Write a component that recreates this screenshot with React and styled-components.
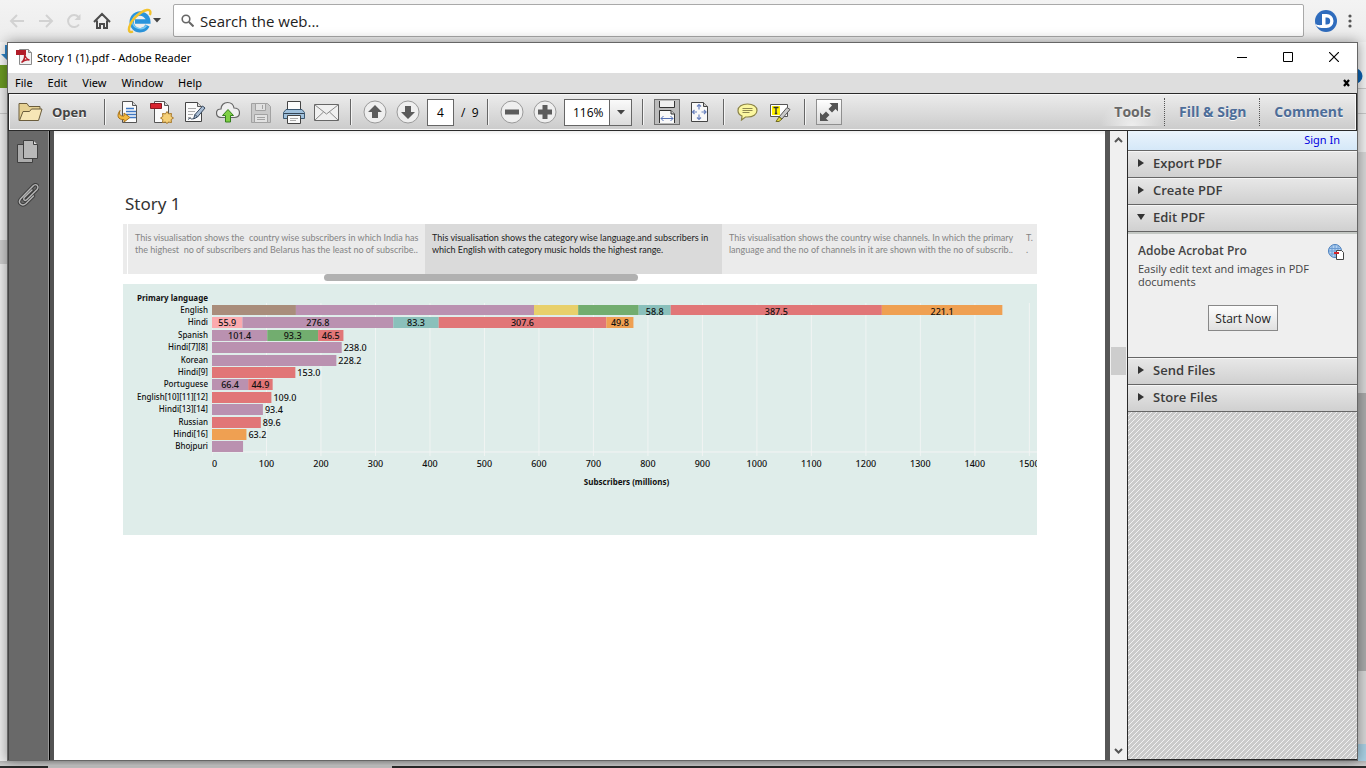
import React from "react";
import styled, { createGlobalStyle, css } from "styled-components";

const ui = '"Noto Sans", "Open Sans", "Liberation Sans", sans-serif';

const Global = createGlobalStyle`
  *, *::before, *::after { box-sizing: border-box; }
  body { margin: 0; font-family: "Open Sans", "Noto Sans", "Liberation Sans", sans-serif; background: #efefef; }
  button, input, select { font: inherit; color: inherit; margin: 0; padding: 0; border: 0; background: none; border-radius: 0; }
  h1, h2, p { margin: 0; }
  svg { display: block; }
`;

/* ---------- browser behind the window ---------- */

const Desktop = styled.div`
  min-height: 100vh;
  display: flex;
  flex-direction: column;
`;

const BrowserBar = styled.header`
  height: 42px;
  display: flex;
  align-items: center;
  padding: 0 5px 1px 9px;
  background: linear-gradient(#f3f3f3, #ececec);
`;

const BrowserButton = styled.button`
  width: ${(p) => p.$w || 28}px;
  height: 28px;
  display: flex;
  align-items: center;
  justify-content: ${(p) => (p.$center ? "center" : "flex-start")};
  flex: none;
`;

const SearchBox = styled.label`
  flex: 1;
  height: 33px;
  display: flex;
  align-items: center;
  gap: 6px;
  padding: 0 7px;
  background: #fff;
  border: 1px solid #a9a9a9;
  border-radius: 2px;
`;

const SearchInput = styled.input`
  flex: 1;
  font-size: 15px;
  color: #222;
  outline: none;
  &::placeholder { color: #222; opacity: 1; }
`;

const Middle = styled.div`
  flex: 1;
  display: flex;
`;

const Strip = styled.div`
  width: ${(p) => p.$w}px;
  flex: none;
  display: flex;
  flex-direction: column;
  overflow: hidden;
`;

const Piece = styled.div`
  height: ${(p) => p.$h}px;
  flex: ${(p) => (p.$grow ? 1 : "none")};
  background: ${(p) => p.$bg};
  border-bottom: ${(p) => (p.$line ? "1px solid #c8c8c8" : "0")};
`;

const BottomStrip = styled.footer`
  height: 7px;
  display: flex;
  align-items: flex-end;
  background: linear-gradient(#b4b4b4, #d8d8d8);
`;

const BottomPart = styled.div`
  height: 2px;
  flex: ${(p) => p.$grow} 1 0;
  background: ${(p) => p.$bg};
`;

/* ---------- reader window ---------- */

const Window = styled.main`
  position: relative;
  flex: 1;
  min-width: 0;
  display: flex;
  flex-direction: column;
  background: #fff;
  border: 1px solid #666;
  box-shadow: 0 0 12px rgba(0, 0, 0, 0.4);
`;

const TitleBar = styled.div`
  height: 30px;
  display: flex;
  align-items: center;
  padding: 0 0 2px 8px;
  color: #000;
`;

const TitleText = styled.h1`
  flex: 1;
  margin-left: 5px;
  font-family: ${ui};
  font-size: 11px;
  font-weight: 400;
`;

const CaptionButton = styled.button`
  width: 46px;
  height: 28px;
  display: flex;
  align-items: center;
  justify-content: center;
`;

const MenuBar = styled.nav`
  height: 20px;
  display: flex;
  align-items: center;
  gap: 15px;
  padding: 0 4px 0 7px;
  background: #dedede;
  color: #000;
  font-family: ${ui};
  font-size: 11px;
`;

const MenuItem = styled.button`
  line-height: 20px;
`;

const CloseDoc = styled.button`
  margin-left: auto;
  width: 10px;
  height: 12px;
`;

const Toolbar = styled.div`
  height: 38px;
  display: flex;
  align-items: center;
  border: 1px solid #2a2a2a;
  box-shadow: inset 0 0 0 1px #f8f8f8;
  background: linear-gradient(#ececec, #cbcbcb);
`;

const OpenButton = styled.button`
  width: 88px;
  height: 30px;
  display: flex;
  align-items: center;
  gap: 9px;
  padding-left: 9px;
  font-size: 13px;
  font-weight: 700;
  color: #444;
  text-shadow: 0 1px 0 #fff;
`;

const Sep = styled.span`
  width: 1px;
  height: 26px;
  margin: 0 7px;
  background: #666;
  box-shadow: 1px 0 0 #f4f4f4;
`;

const ToolButton = styled.button`
  width: 33px;
  height: 28px;
  flex: none;
  display: flex;
  align-items: center;
  justify-content: center;
`;

const PageInput = styled.input`
  width: 27px;
  height: 27px;
  margin-left: 3px;
  border: 1px solid #666;
  background: #fff;
  color: #000;
  font-size: 12px;
  text-align: center;
`;

const PageTotal = styled.span`
  width: 26px;
  padding-left: 7px;
  font-size: 12px;
  color: #000;
  white-space: pre;
`;

const ZoomBox = styled.div`
  width: 68px;
  height: 27px;
  margin: 0 3px;
  display: grid;
  border: 1px solid #666;
  background: #fff;
`;

const ZoomSelect = styled.select`
  grid-area: 1 / 1;
  appearance: none;
  padding-left: 8px;
  font-size: 12px;
  color: #000;
`;

const ZoomCaret = styled.span`
  grid-area: 1 / 1;
  justify-self: end;
  width: 22px;
  display: flex;
  align-items: center;
  justify-content: center;
  border-left: 1px solid #666;
  background: linear-gradient(#fafafa, #dcdcdc);
  pointer-events: none;
`;

const Pressed = styled.span`
  width: 26px;
  height: 26px;
  display: flex;
  align-items: center;
  justify-content: center;
  border: 1px solid ${(p) => (p.$light ? "#8f8f8f" : "#6f6f6f")};
  background: ${(p) => (p.$light ? "linear-gradient(#fff, #d8d8d8)" : "#bcbcbc")};
`;

const PaneTabs = styled.div`
  margin-left: auto;
  display: flex;
  align-items: center;
`;

const PaneTab = styled.button`
  height: 28px;
  padding: 0 13px 2px 14px;
  font-size: 14px;
  font-weight: 700;
  color: ${(p) => (p.$active ? "#686868" : "#4d6d99")};
  text-shadow: 0 1px 0 #f6f6f6;
  & + & { border-left: 1px dotted #555; }
  ${(p) => p.$active && css`background: radial-gradient(ellipse at 50% 100%, #eee, transparent 70%);`}
`;

const Body = styled.div`
  flex: 1;
  display: flex;
`;

const SideRail = styled.aside`
  width: 42px;
  flex: none;
  padding: 8px 0 0 8px;
  display: flex;
  flex-direction: column;
  gap: 18px;
  background: #696969;
  border-left: 1px solid #444;
  border-right: 1px solid #000;
  box-shadow: inset -1px 0 0 #999;
`;

const RailButton = styled.button`
  width: 26px;
  height: 25px;
`;

const DocArea = styled.section`
  flex: 1;
  min-width: 0;
  display: flex;
  border-left: 4px solid #535353;
  border-right: 5px solid #565656;
`;

const Paper = styled.article`
  flex: 1;
  min-width: 0;
  padding: 59px 68px 0 69px;
  background: linear-gradient(#ededed, #fff 4px);
`;

const StoryTitle = styled.h2`
  margin-bottom: 6px;
  padding-left: 2px;
  font-family: ${ui};
  font-size: 17px;
  line-height: 28px;
  font-weight: 400;
  color: #333;
`;

const Points = styled.div`
  display: grid;
  grid-template-columns: 5px 297fr 297fr 297fr 18fr;
  height: 50px;
`;

const PointEdge = styled.span`
  margin-right: 1px;
  background: #ebebeb;
`;

const Point = styled.button`
  min-width: 0;
  overflow: hidden;
  padding: 8px 0 0 7px;
  text-align: left;
  display: flex;
  flex-direction: column;
  white-space: pre;
  font-family: Lato, ${ui};
  font-size: 9px;
  line-height: 12px;
  background: ${(p) => (p.$active ? "#dadada" : "#ebebeb")};
  color: ${(p) => (p.$active ? "#222" : "#848484")};
`;

const StoryScroll = styled.div`
  height: 10px;
  padding-left: 22%;
`;

const StoryThumb = styled.div`
  width: 44%;
  height: 7px;
  border-radius: 4px;
  background: #b1b1b1;
`;

const ChartCard = styled.figure`
  margin: 0;
  display: flex;
  background: #dfedea;
  overflow: hidden;
`;

const ChartLabels = styled.svg`
  width: 89px;
  height: 251px;
  flex: none;
  font-family: ${ui};
  font-size: 8px;
  font-weight: 500;
  fill: #111;
`;

const ChartPlot = styled.svg`
  flex: 1;
  min-width: 0;
  height: 251px;
  font-family: ${ui};
  font-size: 9px;
  font-weight: 500;
  fill: #111;
`;

const ScrollBar = styled.div`
  width: 17px;
  flex: none;
  display: flex;
  flex-direction: column;
  align-items: center;
  justify-content: space-between;
  padding: 6px 0;
  background: #f0f0f0;
`;

const ScrollTrack = styled.div`
  flex: 1;
  width: 15px;
  display: flex;
  flex-direction: column;
`;

const Gap = styled.span`
  flex: ${(p) => p.$grow} 1 0;
`;

const ScrollThumb = styled.span`
  height: 28px;
  background: #cdcdcd;
`;

const Panel = styled.aside`
  width: 230px;
  flex: none;
  display: flex;
  flex-direction: column;
  border-left: 1px solid #2a2a2a;
  border-bottom: 1px solid #2a2a2a;
  background-color: #cbcbcb;
  background-image: linear-gradient(to bottom right, transparent 44%, #f2f2f2 44%, #f2f2f2 56%, transparent 56%);
  background-size: 5px 5px;
`;

const SignInRow = styled.div`
  height: 19px;
  padding-right: 17px;
  text-align: right;
  line-height: 18px;
  font-family: ${ui};
  font-size: 11px;
  background: linear-gradient(#eaf4fc, #d5e8f8);
`;

const SignInLink = styled.a`
  color: #0000e0;
  text-decoration: none;
`;

const PanelHeader = styled.button`
  height: 27px;
  display: flex;
  align-items: center;
  gap: 8px;
  padding: 0 0 2px 9px;
  border-top: 1px solid #666;
  box-shadow: inset 0 1px 0 #f6f6f6;
  background: linear-gradient(#e8e8e8, #d0d0d0);
  font-size: 13px;
  font-weight: 600;
  color: #3c3c3c;
`;

const PanelBody = styled.div`
  height: 126px;
  padding: 12px 12px 0 10px;
  border-top: 1px solid #666;
  box-shadow: inset 0 2px 0 #c4c8c4;
  background: #efefef;
  color: #444;
`;

const OfferHead = styled.div`
  display: flex;
  justify-content: space-between;
  height: 18px;
`;

const OfferTitle = styled.h2`
  font-size: 12px;
  line-height: 14px;
  font-weight: 600;
`;

const OfferText = styled.p`
  width: 190px;
  font-size: 11px;
  line-height: 13px;
`;

const StartButton = styled.button`
  display: block;
  width: 70px;
  height: 26px;
  margin: 17px auto 0 70px;
  border: 1px solid #888;
  background: linear-gradient(#fdfdfd, #e0e0e0);
  font-size: 12px;
  color: #222;
`;

const Closing = styled.div`
  border-top: 1px solid #666;
`;

/* ---------- icons ---------- */

const Arrow = ({ flip }) => (
  <svg width="16" height="16" viewBox="0 0 16 16" fill="none" stroke="#d2d2d2" strokeWidth="2">
    {flip ? <path d="M1 8h13M8 2l6 6-6 6" /> : <path d="M15 8H2M8 2L2 8l6 6" />}
  </svg>
);
const Reload = () => (
  <svg width="16" height="16" viewBox="0 0 16 16" fill="none" stroke="#d2d2d2" strokeWidth="2">
    <path d="M13 11.5A6 6 0 1 1 12.5 4" /><path d="M14.5 1v6h-6z" fill="#d2d2d2" stroke="none" />
  </svg>
);
const Home = () => (
  <svg width="18" height="18" viewBox="0 0 18 18" fill="none" stroke="#4c4c4c" strokeWidth="2">
    <path d="M1 10L9 2l8 8M4 8.500V16h3v-4h4v4h3V8.500" />
  </svg>
);
const Explorer = () => (
  <svg width="26" height="26" viewBox="0 0 26 26" fill="none">
    <path d="M20.500 17.500A8.300 8.300 0 1 1 21.300 13.500H8" stroke="#2a94dc" strokeWidth="4.400" />
    <path d="M19.500 17.500A7.800 7.800 0 0 1 5.500 14C5.800 9 9 6.500 13 6" stroke="#7cccf4" strokeWidth="1.400" />
    <path d="M6 23.500c-3.500 1.500-5-.5-3.500-5C4.500 11.500 13 3.500 20 2c3.500-.6 4 2 2.800 5" stroke="#f3c32c" strokeWidth="2.400" />
  </svg>
);
const Caret = ({ color = "#444" }) => (
  <svg width="8" height="5" viewBox="0 0 8 5"><path d="M0 0h8L4 4.500z" fill={color} /></svg>
);
const Magnifier = () => (
  <svg width="13" height="13" viewBox="0 0 13 13" fill="none" stroke="#666"><circle cx="5" cy="5" r="3.800" strokeWidth="1.600" /><path d="M8 8l4.500 4.500" strokeWidth="2" /></svg>
);
const Profile = () => (
  <svg width="22" height="22" viewBox="0 0 22 22">
    <circle cx="11" cy="11" r="11" fill="#2f6cbd" />
    <path d="M7 4h4.500a7 7 0 0 1 0 14H8C4 18 1 16.500.5 14c2 1.200 4 1.300 6.500 1z" fill="#fff" />
    <path d="M10.500 7.500h1.200a3.500 3.500 0 0 1 0 7h-1.200z" fill="#2f6cbd" />
  </svg>
);
const Kebab = () => (
  <svg width="4" height="14" viewBox="0 0 4 14" fill="#555"><circle cx="2" cy="2" r="1.600" /><circle cx="2" cy="7" r="1.600" /><circle cx="2" cy="12" r="1.600" /></svg>
);
const PdfFile = () => (
  <svg width="16" height="16" viewBox="0 0 16 16">
    <path d="M3.500.5h9l3 3v12h-12z" fill="#f2f2f2" stroke="#8a8a8a" />
    <path d="M12.500.5v3h3" fill="#ccc" stroke="#8a8a8a" />
    <path d="M0 1h10v5H0z" fill="#b11c28" />
    <path d="M8.500 4.500c.5 3 2.500 6 5 6.500-3-.8-6 .5-8 2.500 2.500-2 3.800-5 3-9z" fill="none" stroke="#b5202c" strokeWidth="1.500" />
  </svg>
);
const Folder = () => (
  <svg width="25" height="20" viewBox="0 0 25 20" stroke="#6b5d3c" strokeLinejoin="round">
    <path d="M1 18.500V1.500h8l2 3h11V10L18.500 18.500z" fill="#e6d193" />
    <path d="M1.500 18.500L5 9.500h6.500l2-2.500H24l-3.500 11.500z" fill="#f6e6b6" />
  </svg>
);
const Sheet = ({ x = 4 }) => (
  <g><path d={`M${x}.5h10l4 4v17h-14z`} fill="#fbfbfb" stroke="#555" /><path d={`M${x + 10}.5v4h4`} fill="#d8d8d8" stroke="#555" /></g>
);
const Convert = () => (
  <svg width="24" height="22" viewBox="0 0 24 22">
    <Sheet x={5.5} />
    <path d="M9 7.500h8M9 10.500h10M9 13.500h10M13 16.500h6" stroke="#3f78c4" strokeWidth="1.400" />
    <path d="M3 9.500C-.5 14 .5 19 7 18.500V21l6-4.500L7 12v3c-3.500.5-5.500-1.500-4-5.500z" fill="#f3b93f" stroke="#a8721a" />
  </svg>
);
const CreatePdf = () => (
  <svg width="24" height="23" viewBox="0 0 24 23">
    <Sheet x={4.5} />
    <path d="M.5 2.500h11v5H.5z" fill="#d8232f" stroke="#8c1820" />
    <path d="M17 10.500l1.600 2.400 2.900-.4-.4 2.900 2.400 1.600-2.400 1.600.4 2.900-2.900-.4L17 22.500l-1.600-1.400-2.900.4.4-2.900-2.400-1.600 2.400-1.600-.4-2.900 2.900.4z" fill="#f5d078" stroke="#a8792b" />
  </svg>
);
const SignDoc = () => (
  <svg width="22" height="22" viewBox="0 0 22 22">
    <path d="M1.500 1.500h12l4 4v15h-16z" fill="#fafafa" stroke="#444" />
    <path d="M13.500 1.500v4h4" fill="#ddd" stroke="#555" />
    <path d="M4 7.500h8M4 10.500h7M4 13.500h5M4 16.500h3" stroke="#aaa" />
    <path d="M9.500 18l1.500-4.500L18.500 5 21 7l-7.500 9z" fill="#a9bdd4" stroke="#34465c" />
    <path d="M11 13.500l2.500 2.500M4 18.500c3-3 3 1 5-1" stroke="#34465c" fill="none" />
  </svg>
);
const Cloud = () => (
  <svg width="24" height="22" viewBox="0 0 24 22">
    <path d="M6 16.500C2.500 16.500.5 14.500.5 12S2.500 8 5 8c0-4 3-6.500 6.500-6.500S17.500 4 18 7c3 0 5.500 1.800 5.500 4.800s-2 4.700-5 4.700z" fill="#efefef" stroke="#666" strokeWidth="1.200" />
    <path d="M12 8.500l5.500 6h-3v6.500h-5v-6.500h-3z" fill="#7fd044" stroke="#35801d" />
  </svg>
);
const Save = () => (
  <svg width="20" height="21" viewBox="0 0 20 21" stroke="#a2a2a2">
    <path d="M.5 1.500h16l3 3v16H.5z" fill="#c9c9c9" />
    <path d="M4.500 1.500h10v7h-10zM3.500 12.500h13v8h-13z" fill="#e2e2e2" />
    <path d="M11.500 3v4M6 15.500h8M6 17.500h8" />
  </svg>
);
const Printer = () => (
  <svg width="22" height="23" viewBox="0 0 22 23" stroke="#444">
    <path d="M4.500.5h13v9h-13z" fill="#fcfcfc" />
    <path d="M3 8.500h16l2.500 3v6h-21v-6z" fill="#9fc0dc" stroke="#3b5871" />
    <path d="M1 12.500h20" stroke="#345" />
    <path d="M4.500 14.500h13v8h-13z" fill="#fafafa" />
    <path d="M7 17.500h8M7 19.500h6" stroke="#aaa" />
  </svg>
);
const Mail = () => (
  <svg width="25" height="17" viewBox="0 0 25 17" stroke="#666" fill="none">
    <path d="M.5.500h24v16H.5z" fill="#f0f0f0" /><path d="M1 1l11.500 9L24 1M1 16l8.500-8M24 16l-8.500-8" stroke="#8a8a8a" />
  </svg>
);
const Round = ({ d }) => (
  <svg width="24" height="24" viewBox="0 0 24 24">
    <circle cx="12" cy="12" r="11" fill="#efefef" stroke="#9a9a9a" /><path d={d} fill="#5c5c5c" />
  </svg>
);
const FitWidth = () => (
  <svg width="18" height="22" viewBox="0 0 18 22" stroke="#333">
    <path d="M1.500 0v6.500h15V0" fill="#f0f0f0" /><path d="M1.500 22V9.500H13l3.500 3.500v9" fill="#f9f9f9" /><path d="M13 9.500V13h3.500" fill="#ccc" />
    <path d="M3 17.500h12M5.500 15L3 17.500 5.500 20M12.500 15l2.500 2.500-2.500 2.500" fill="none" stroke="#5571b5" />
  </svg>
);
const FitPage = () => (
  <svg width="18" height="20" viewBox="0 0 18 20" stroke="#444">
    <path d="M.5.500h12l4 4v15H.5z" fill="#f8f8f8" /><path d="M12.500.5v4h4" fill="#ccc" />
    <path d="M8 2.500v5M8 12.500v5M1.500 10H6M10.500 10H15M6 4.500l2-2 2 2M6 15.500l2 2 2-2M3.500 8l-2 2 2 2M13 8l2 2-2 2" fill="none" stroke="#6b83c0" strokeWidth="1.200" />
  </svg>
);
const Comment = () => (
  <svg width="21" height="18" viewBox="0 0 21 18">
    <path d="M10.500 1C16 1 20 3.500 20 7.500S16 14 10.500 14l-2 0-4 3 .500-4C2.500 12 1 10 1 7.500 1 3.500 5 1 10.500 1z" fill="#fbf7a0" stroke="#8b8348" strokeWidth="1.200" />
    <path d="M5.500 5.500h10M5.500 7.500h10M5.500 9.500h7" stroke="#8f8850" />
  </svg>
);
const Highlight = () => (
  <svg width="21" height="19" viewBox="0 0 21 19">
    <path d="M.5 1.500h17v12H.5z" fill="#fff" stroke="#555" />
    <path d="M2 3h8v9H2z" fill="#fff200" />
    <path d="M3.500 4.500h5M6 4.500v6M4.800 10.500h2.400" stroke="#333" strokeWidth="1.400" />
    <path d="M9 14l8-9.500 3 2L12 16z" fill="#c9c9c9" stroke="#555" /><path d="M9 14l3 2-3 2.500H6z" fill="#e3d93c" stroke="#716b22" />
  </svg>
);
const Expand = () => (
  <svg width="20" height="20" viewBox="0 0 20 20" fill="#555"><path d="M10.500 1H19v8.500L16.500 7 13 10.500 9.500 7 13 3.500zM9.500 19H1v-8.500L3.500 13 7 9.500l3.500 3.500L7 16.500z" /></svg>
);
const Pages = () => (
  <svg width="22" height="24" viewBox="0 0 22 24" stroke="#3f3f3f">
    <path d="M.5 4.500h15v18H.5z" fill="#acacac" /><path d="M6.500.500h10l4 4v14h-14z" fill="#b8b8b8" /><path d="M16.500.5v4h4" fill="#ddd" />
  </svg>
);
const Clip = () => (
  <svg width="22" height="24" viewBox="0 0 22 24" fill="none" strokeLinecap="round">
    {[["#3d3d3d", 3.4], ["#b5b5b5", 1.4]].map(([c, w]) => (
      <path key={c} d="M16.500 13L9 20.500C5 24 .500 20 3.500 16L16 3c3-3.200 6.500.300 4 3.500L10 16.500c-2 2-4.500 0-2.500-2.200L15 7" stroke={c} strokeWidth={w} />
    ))}
  </svg>
);
const Chevron = ({ down, color = "#555" }) => (
  <svg width="9" height="6" viewBox="0 0 9 6" fill="none" stroke={color} strokeWidth="2"><path d={down ? "M1 1l3.500 3.500L8 1" : "M1 5l3.500-3.500L8 5"} /></svg>
);
const Disclosure = ({ open }) => (
  <svg width="8" height="8" viewBox="0 0 8 8" fill="#333"><path d={open ? "M0 1h8L4 7z" : "M1 0l6 4-6 4z"} /></svg>
);
const GlobeDoc = () => (
  <svg width="17" height="17" viewBox="0 0 17 17">
    <circle cx="7" cy="7" r="6.500" fill="#b4d3f2" stroke="#4278b8" />
    <path d="M1 4.500h12M.5 7h13M1 10h12M4 1.500v11M7 .5v13M10 1.500v11" stroke="#6c9bd2" />
    <path d="M8.500 6.500h5l2 2v7h-7z" fill="#fff" stroke="#444" /><path d="M6 8h5v2H6z" fill="#d2232a" />
  </svg>
);
const BlueArrow = () => (
  <svg width="7" height="23" viewBox="0 0 7 23"><path d="M5 3h6v9h4l-7 7-7-7h4z" fill="#2f83c6" /></svg>
);

/* ---------- chart ---------- */

const DOMAIN = 1514;
const pct = (v) => `${(v / DOMAIN) * 100}%`;
const rowTop = (i) => Math.round(21 + i * 12.4);

const C = { brown: "#a98d7b", purple: "#ba91b0", yellow: "#e8d06b", green: "#72ad6f", teal: "#8ac0bb", red: "#e17677", orange: "#efa052", pink: "#fbaaae" };

const rows = [
  { name: "English", parts: [[154, C.brown], [437, C.purple], [81, C.yellow], [111, C.green], [58.8, C.teal, "58.8"], [387.5, C.red, "387.5"], [221.1, C.orange, "221.1"]] },
  { name: "Hindi", parts: [[55.9, C.pink, "55.9"], [276.8, C.purple, "276.8"], [83.3, C.teal, "83.3"], [307.6, C.red, "307.6"], [49.8, C.orange, "49.8"]] },
  { name: "Spanish", parts: [[101.4, C.purple, "101.4"], [93.3, C.green, "93.3"], [46.5, C.red, "46.5"]] },
  { name: "Hindi[7][8]", parts: [[238, C.purple]], after: "238.0" },
  { name: "Korean", parts: [[228.2, C.purple]], after: "228.2" },
  { name: "Hindi[9]", parts: [[153, C.red]], after: "153.0" },
  { name: "Portuguese", parts: [[66.4, C.purple, "66.4"], [44.9, C.red, "44.9"]] },
  { name: "English[10][11][12]", parts: [[109, C.red]], after: "109.0" },
  { name: "Hindi[13][14]", parts: [[93.4, C.purple]], after: "93.4" },
  { name: "Russian", parts: [[89.6, C.red]], after: "89.6" },
  { name: "Hindi[16]", parts: [[63.2, C.orange]], after: "63.2" },
  { name: "Bhojpuri", parts: [[57, C.purple]] },
];

const ticks = Array.from({ length: 16 }, (_, i) => i * 100);

function Chart() {
  return (
    <ChartCard aria-label="Subscribers by primary language">
      <ChartLabels>
        <text x="85" y="17" textAnchor="end" fontWeight="700">Primary language</text>
        {rows.map((r, i) => (
          <text key={r.name} x="85" y={rowTop(i) + 8} textAnchor="end">{r.name}</text>
        ))}
      </ChartLabels>
      <ChartPlot>
        {ticks.map((t) => (
          <line key={t} x1={pct(t)} x2={pct(t)} y1="19" y2="172" stroke="#f1f4f3" />
        ))}
        <line x1="0" x2="100%" y1="168" y2="168" stroke="#f4f4f4" />
        {rows.map((r, i) => {
          let start = 0;
          const y = rowTop(i);
          return (
            <g key={r.name}>
              {r.parts.map(([v, color, label], k) => {
                const x = start;
                start += v;
                return (
                  <g key={k}>
                    <rect x={pct(x)} width={pct(v)} y={y} height={i === 0 ? 10 : 11} fill={color} />
                    {label && <text x={pct(x + v / 2)} y={y + (i === 0 ? 10 : 9)} textAnchor="middle">{label}</text>}
                  </g>
                );
              })}
              {r.after && <text x={pct(start)} dx="2" y={y + 9}>{r.after}</text>}
            </g>
          );
        })}
        {ticks.map((t) => (
          <text key={t} x={pct(t)} y="183" textAnchor={t === 0 ? "start" : "middle"}>{t}</text>
        ))}
        <text x="50%" dx="2" y="201" textAnchor="middle" fontWeight="700" fontSize="8">Subscribers (millions)</text>
      </ChartPlot>
    </ChartCard>
  );
}

const points = [
  ["This visualisation shows the  country wise subscribers in which India has", "the highest  no of subscribers and Belarus has the least no of subscribe.."],
  ["This visualisation shows the category wise language.and subscribers in", "which English with category music holds the highest range."],
  ["This visualisation shows the country wise channels. In which the primary", "language and the no of channels in it are shown with the no of subscrib.."],
  ["T.", "."],
];

const fileTools = [["Convert", Convert], ["Create PDF", CreatePdf], ["Sign", SignDoc], ["Upload", Cloud], ["Save", Save], ["Print", Printer], ["Mail", Mail]];

const Tool = ({ label, children }) => <ToolButton aria-label={label}>{children}</ToolButton>;
const Section = ({ open, children }) => (
  <PanelHeader aria-expanded={!!open}><Disclosure open={open} />{children}</PanelHeader>
);

export default function App() {
  return (
    <Desktop>
      <Global />
      <BrowserBar>
        <BrowserButton $w={29} aria-label="Back"><Arrow /></BrowserButton>
        <BrowserButton aria-label="Forward"><Arrow flip /></BrowserButton>
        <BrowserButton $w={27} aria-label="Reload"><Reload /></BrowserButton>
        <BrowserButton $w={34} aria-label="Home"><Home /></BrowserButton>
        <BrowserButton $w={46} aria-label="Internet Explorer"><Explorer /><Caret /></BrowserButton>
        <SearchBox>
          <Magnifier />
          <SearchInput aria-label="Search the web" placeholder="Search the web..." />
        </SearchBox>
        <BrowserButton $w={44} $center aria-label="Profile"><Profile /></BrowserButton>
        <BrowserButton $w={13} aria-label="More"><Kebab /></BrowserButton>
      </BrowserBar>
      <Middle>
        <Strip $w={7}>
          <Piece $h={23} $bg="#f6f6f6"><BlueArrow /></Piece>
          <Piece $h={23} $bg="#6b9a22" />
          <Piece $h={26} $bg="#eee" $line />
          <Piece $h={126} $bg="#ededed" />
          <Piece $h={24} $bg="#cdcdcd" />
          <Piece $grow $bg="#ededed" />
        </Strip>
        <Window>
          <TitleBar>
            <PdfFile />
            <TitleText>Story 1 (1).pdf - Adobe Reader</TitleText>
            <CaptionButton aria-label="Minimize"><svg width="10" height="10"><path d="M0 5.500h10" stroke="#000" /></svg></CaptionButton>
            <CaptionButton aria-label="Maximize"><svg width="10" height="10"><path d="M.5.500h9v9h-9z" fill="none" stroke="#000" /></svg></CaptionButton>
            <CaptionButton aria-label="Close"><svg width="10" height="10"><path d="M0 0l10 10M10 0L0 10" stroke="#000" strokeWidth="1.200" /></svg></CaptionButton>
          </TitleBar>
          <MenuBar>
            {["File", "Edit", "View", "Window", "Help"].map((m) => <MenuItem key={m}>{m}</MenuItem>)}
            <CloseDoc aria-label="Close document"><svg width="7" height="12" viewBox="0 0 7 12"><path d="M1 3l5 6M6 3L1 9" stroke="#000" strokeWidth="2.200" /></svg></CloseDoc>
          </MenuBar>
          <Toolbar>
            <OpenButton><Folder />Open</OpenButton>
            <Sep />
            {fileTools.map(([name, Icon]) => <Tool key={name} label={name}><Icon /></Tool>)}
            <Sep />
            <Tool label="Previous page"><Round d="M12 5l7 7h-4v6H9v-6H5z" /></Tool>
            <Tool label="Next page"><Round d="M12 19l7-7h-4V6H9v6H5z" /></Tool>
            <PageInput aria-label="Page number" defaultValue="4" />
            <PageTotal>/  9</PageTotal>
            <Sep />
            <Tool label="Zoom out"><Round d="M5 9.500h14v5H5z" /></Tool>
            <Tool label="Zoom in"><Round d="M9.500 5h5v4.500H19v5h-4.500V19h-5v-4.500H5v-5h4.500z" /></Tool>
            <ZoomBox>
              <ZoomSelect aria-label="Zoom level" defaultValue="116%"><option>116%</option><option>100%</option></ZoomSelect>
              <ZoomCaret><Caret /></ZoomCaret>
            </ZoomBox>
            <Sep />
            <Tool label="Fit width"><Pressed><FitWidth /></Pressed></Tool>
            <Tool label="Fit page"><FitPage /></Tool>
            <Sep />
            <Tool label="Add note"><Comment /></Tool>
            <Tool label="Highlight text"><Highlight /></Tool>
            <Sep />
            <Tool label="Read mode"><Pressed $light><Expand /></Pressed></Tool>
            <PaneTabs>
              <PaneTab $active>Tools</PaneTab>
              <PaneTab>Fill &amp; Sign</PaneTab>
              <PaneTab>Comment</PaneTab>
            </PaneTabs>
          </Toolbar>
          <Body>
            <SideRail>
              <RailButton aria-label="Page thumbnails"><Pages /></RailButton>
              <RailButton aria-label="Attachments"><Clip /></RailButton>
            </SideRail>
            <DocArea>
              <Paper>
                <StoryTitle>Story 1</StoryTitle>
                <Points>
                  <PointEdge />
                  {points.map((lines, i) => (
                    <Point key={lines[0]} $active={i === 1}>
                      {lines.map((l) => <span key={l}>{l}</span>)}
                    </Point>
                  ))}
                </Points>
                <StoryScroll><StoryThumb /></StoryScroll>
                <Chart />
              </Paper>
            </DocArea>
            <ScrollBar>
              <Chevron />
              <ScrollTrack><Gap $grow={203} /><ScrollThumb /><Gap $grow={370} /></ScrollTrack>
              <Chevron down />
            </ScrollBar>
            <Panel>
              <SignInRow><SignInLink href="#signin">Sign In</SignInLink></SignInRow>
              <Section>Export PDF</Section>
              <Section>Create PDF</Section>
              <Section open>Edit PDF</Section>
              <PanelBody>
                <OfferHead><OfferTitle>Adobe Acrobat Pro</OfferTitle><GlobeDoc /></OfferHead>
                <OfferText>Easily edit text and images in PDF documents</OfferText>
                <StartButton>Start Now</StartButton>
              </PanelBody>
              <Section>Send Files</Section>
              <Section>Store Files</Section>
              <Closing />
            </Panel>
          </Body>
        </Window>
        <Strip $w={8}>
          <Piece $h={26} $bg="#f2f2f2" />
          <Piece $h={21} $bg="#f2f2f2" $line><svg width="8" height="16"><circle cx="-3" cy="8" r="7.500" fill="#0b62b0" /></svg></Piece>
          <Piece $h={25} $bg="#eee" $line />
          <Piece $h={38} $bg="#eee" />
          <Piece $h={241} $bg="#d6d6d6" />
          <Piece $h={278} $bg="#a9a9a9" />
          <Piece $grow $bg="#d6d6d6" />
          <Piece $h={17} $bg="#a9cfe2" />
        </Strip>
      </Middle>
      <BottomStrip>
        <BottomPart $grow={48} $bg="#2b2b2b" />
        <BottomPart $grow={344} $bg="#c4c4c4" />
        <BottomPart $grow={974} $bg="#2b2b2b" />
      </BottomStrip>
    </Desktop>
  );
}
